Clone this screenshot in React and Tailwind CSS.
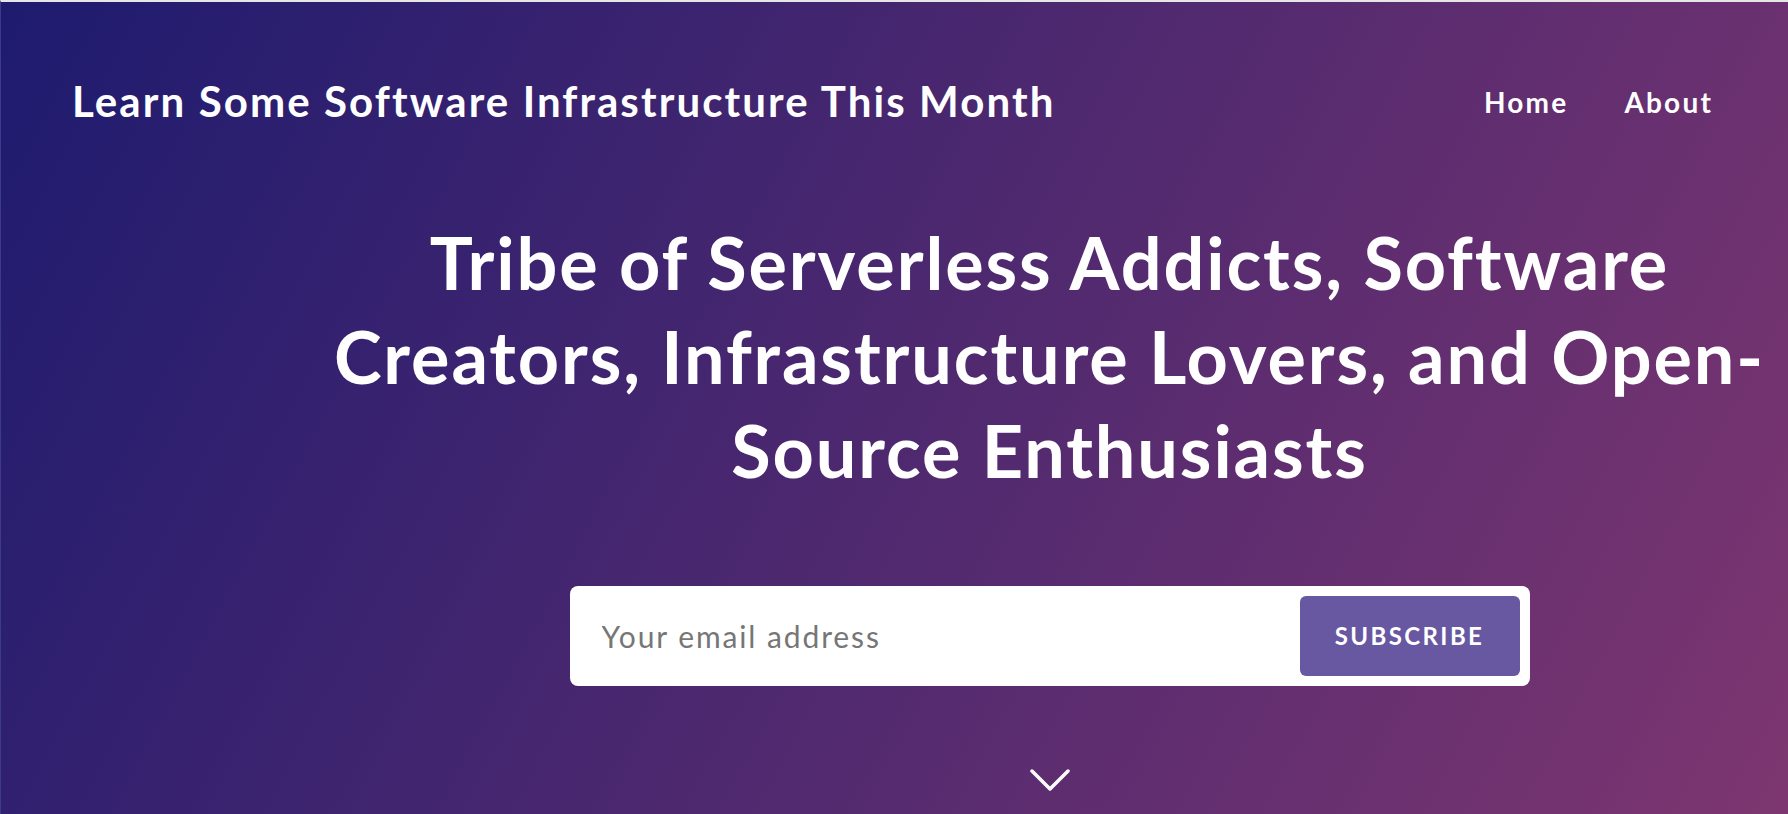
import React from 'react';

const Chevron = () => (
    <svg width="40" height="22" viewBox="0 0 40 22" fill="none">
        <polyline points="2,2 20,20 38,2" stroke="white" strokeWidth="3.5" strokeLinecap="round" strokeLinejoin="round" />
    </svg>
);

const App = () => {
    return (
        <div className="h-[814px] overflow-hidden border-t-2 border-l border-t-[#e6e6e6] border-l-[#3d3a86] bg-[linear-gradient(118deg,#1e1b6f,#7d3670)] font-[Lato,sans-serif] text-white">
            <header className="flex items-start justify-between pl-[71px] pr-[75px] pt-[74px]">
                <a href="#" className="text-[42px] leading-[50px] font-bold tracking-[2.1px]">
                    Learn Some Software Infrastructure This Month
                </a>
                <nav className="mt-[1px] flex gap-[56px] text-[28px] leading-[50px] font-bold tracking-[2.2px]">
                    <a href="#">Home</a>
                    <a href="#">About</a>
                </nav>
            </header>

            <section className="flex flex-col items-center pl-[310px]">
                <h1 className="mt-[88px] whitespace-nowrap text-center text-[72px] leading-[94px] font-bold tracking-[1.9px]">
                    Tribe of Serverless Addicts, Software
                    <br />
                    Creators, Infrastructure Lovers, and Open-
                    <br />
                    Source Enthusiasts
                </h1>

                <form className="mt-[89px] flex h-[100px] w-[960px] items-center rounded-lg bg-white p-[10px]">
                    <input
                        type="email"
                        placeholder="Your email address"
                        className="h-full flex-1 bg-transparent pl-[22px] text-[30px] tracking-[1.9px] text-gray-800 placeholder:text-[#767676] outline-none"
                    />
                    <button
                        type="submit"
                        className="h-[80px] w-[220px] rounded-md bg-[#6858a2] text-[24px] font-bold tracking-[2.4px] text-white"
                    >
                        SUBSCRIBE
                    </button>
                </form>

                <div className="mt-[83px]">
                    <Chevron />
                </div>
            </section>
        </div>
    );
};

export default App;
